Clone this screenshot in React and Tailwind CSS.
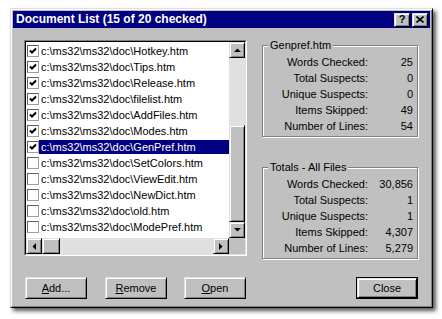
import React from "react";

const files = [
  "Hotkey",
  "Tips",
  "Release",
  "filelist",
  "AddFiles",
  "Modes",
  "GenPref",
  "SetColors",
  "ViewEdit",
  "NewDict",
  "old",
  "ModePref",
];

const raised =
  "bg-[#c0c0c0] border border-t-[#dfdfdf] border-l-[#dfdfdf] border-r-black border-b-black shadow-[inset_1px_1px_0_#fff,inset_-1px_-1px_0_#808080]";

const Arrow = ({ dir }) => {
  const pts = {
    up: "0,4 7,4 3.5,0.5",
    down: "0,0 7,0 3.5,3.5",
    left: "4,0 4,7 0.5,3.5",
    right: "0,0 0,7 3.5,3.5",
  }[dir];
  const vert = dir === "up" || dir === "down";
  return (
    <svg width={vert ? 7 : 4} height={vert ? 4 : 7} viewBox={vert ? "0 0 7 4" : "0 0 4 7"}>
      <polygon points={pts} fill="#000" />
    </svg>
  );
};

const Check = () => (
  <svg width="8" height="8" viewBox="0 0 8 8">
    <polyline points="1,3.5 3,5.5 7,1.5" fill="none" stroke="#000" strokeWidth="2" />
  </svg>
);

const Stats = ({ title, rows }) => (
  <fieldset className="border border-[#808080] shadow-[inset_1px_1px_0_#fff,1px_1px_0_#fff] pb-[2px]">
    <legend className="ml-[5px] px-[2px] bg-[#c0c0c0] leading-[13px]">{title}</legend>
    <div className="grid grid-cols-[105px_45px] mt-[2px]">
      {rows.map(([label, value]) => (
        <React.Fragment key={label}>
          <div className="h-[16px] flex items-center justify-end">{label}</div>
          <div className="h-[16px] flex items-center justify-end">{value}</div>
        </React.Fragment>
      ))}
    </div>
  </fieldset>
);

const Btn = ({ children, isDefault }) =>
  isDefault ? (
    <button className="w-[62px] h-[22px] border border-black p-0 flex">
      <span className={`flex-1 flex items-center justify-center ${raised}`}>{children}</span>
    </button>
  ) : (
    <button className={`w-[62px] h-[22px] flex items-center justify-center ${raised}`}>
      {children}
    </button>
  );

export default function App() {
  return (
    <div className="w-[442px] h-[319px] bg-white pt-[8px] pl-[10px] font-['Liberation_Sans',Arial,sans-serif] text-[11px] leading-[13px] text-black">
      <div className="w-[423px] h-[300px] flex flex-col p-[2px] bg-[#c0c0c0] border border-t-[#dfdfdf] border-l-[#dfdfdf] border-r-black border-b-black shadow-[inset_1px_1px_0_#fff,inset_-1px_-1px_0_#808080,3px_3px_4px_rgba(0,0,0,0.65)]">
        {/* Title bar */}
        <div className="h-[17px] bg-[#000080] flex items-center pl-[3px] pr-[2px]">
          <span className="text-white font-bold text-[12px]">Document List (15 of 20 checked)</span>
          <div className="ml-auto flex gap-[2px]">
            <div className={`w-[16px] h-[14px] flex items-center justify-center font-bold text-[11px] ${raised}`}>?</div>
            <div className={`w-[16px] h-[14px] flex items-center justify-center ${raised}`}>
              <svg width="8" height="7" viewBox="0 0 8 7">
                <path d="M0.5 0.5 L7.5 6.5 M7.5 0.5 L0.5 6.5" stroke="#000" strokeWidth="1.6" />
              </svg>
            </div>
          </div>
        </div>

        <div className="flex-1 flex flex-col px-[11px] pt-[12px]">
          <div className="flex items-start">
            {/* File list */}
            <div className="w-[223px] h-[216px] border border-t-[#808080] border-l-[#808080] border-r-white border-b-white flex">
              <div className="flex-1 border border-t-black border-l-black border-r-[#dfdfdf] border-b-[#dfdfdf] bg-white grid grid-cols-[1fr_16px] grid-rows-[1fr_16px] overflow-hidden">
                <div className="overflow-hidden pt-[1px]">
                  {files.map((f, i) => {
                    const checked = i < 7;
                    const selected = f === "GenPref";
                    return (
                      <div key={f} className="h-[16px] flex items-center pl-[1px]">
                        <div className="w-[12px] h-[12px] shrink-0 bg-white border border-t-[#606060] border-l-[#606060] border-r-[#a0a0a0] border-b-[#a0a0a0] flex items-center justify-center">
                          {checked && <Check />}
                        </div>
                        <span
                          className={`flex-1 h-[14px] leading-[14px] pl-[2px] whitespace-nowrap ${
                            selected ? "bg-[#000080] text-white" : ""
                          }`}
                        >
                          c:\ms32\ms32\doc\{f}.htm
                        </span>
                      </div>
                    );
                  })}
                </div>
                {/* Vertical scrollbar */}
                <div className="flex flex-col">
                  <div className={`h-[16px] flex items-center justify-center ${raised}`}>
                    <Arrow dir="up" />
                  </div>
                  <div className="h-[67px] bg-[#e0e0e0]" />
                  <div className={`h-[97px] ${raised}`} />
                  <div className={`h-[16px] flex items-center justify-center ${raised}`}>
                    <Arrow dir="down" />
                  </div>
                </div>
                {/* Horizontal scrollbar */}
                <div className="flex">
                  <div className={`w-[16px] flex items-center justify-center ${raised}`}>
                    <Arrow dir="left" />
                  </div>
                  <div className={`w-[18px] ${raised}`} />
                  <div className="flex-1 bg-[#e0e0e0]" />
                  <div className={`w-[16px] flex items-center justify-center ${raised}`}>
                    <Arrow dir="right" />
                  </div>
                </div>
                <div className="bg-[#c0c0c0]" />
              </div>
            </div>

            {/* Stats */}
            <div className="ml-[15px] w-[156px] -mt-[1px] flex flex-col">
              <Stats
                title="Genpref.htm"
                rows={[
                  ["Words Checked:", "25"],
                  ["Total Suspects:", "0"],
                  ["Unique Suspects:", "0"],
                  ["Items Skipped:", "49"],
                  ["Number of Lines:", "54"],
                ]}
              />
              <div className="mt-[24px]">
                <Stats
                  title="Totals - All Files"
                  rows={[
                    ["Words Checked:", "30,856"],
                    ["Total Suspects:", "1"],
                    ["Unique Suspects:", "1"],
                    ["Items Skipped:", "4,307"],
                    ["Number of Lines:", "5,279"],
                  ]}
                />
              </div>
            </div>
          </div>

          {/* Buttons */}
          <div className="flex mt-[18px] pl-[1px] pr-[1px]">
            <Btn>
              <span><u>A</u>dd...</span>
            </Btn>
            <div className="ml-[18px]">
              <Btn>
                <span><u>R</u>emove</span>
              </Btn>
            </div>
            <div className="ml-[17px]">
              <Btn>
                <span><u>O</u>pen</span>
              </Btn>
            </div>
            <div className="ml-auto">
              <Btn isDefault>Close</Btn>
            </div>
          </div>
        </div>
      </div>
    </div>
  );
}
